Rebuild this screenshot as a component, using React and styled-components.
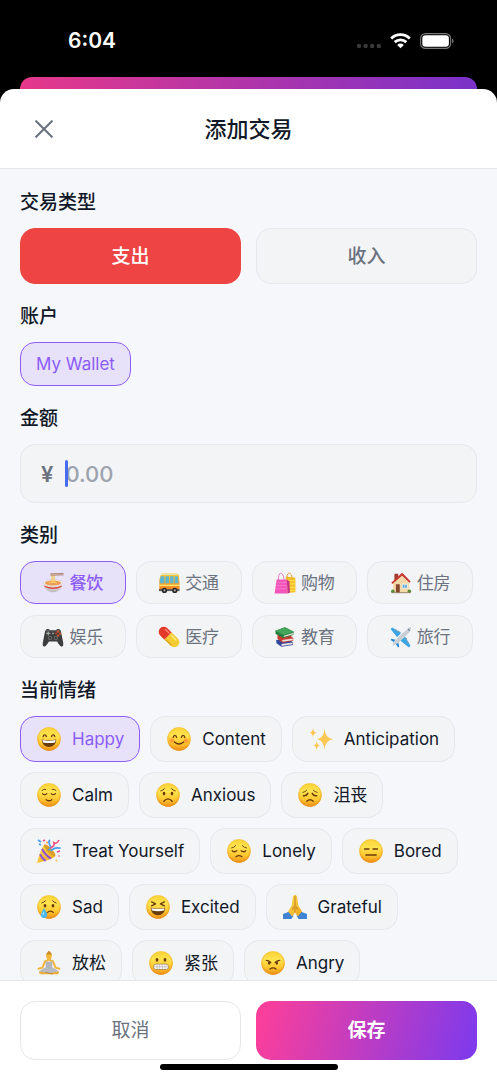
import React, { useState } from 'react';
import styled, { createGlobalStyle, css } from 'styled-components';

const color = {
  ink: '#111827',
  muted: '#6b7280',
  faint: '#9ca3af',
  line: '#e5e7eb',
  field: '#f3f4f6',
  page: '#f5f7fb',
  violet: '#8b5cf6',
  violetSoft: '#e8e1fa',
  red: '#ef4444',
};

const GlobalStyle = createGlobalStyle`
  *, *::before, *::after { box-sizing: border-box; }
  body {
    margin: 0;
    background: #000;
    color: ${color.ink};
    font-family: Inter, "Noto Sans CJK SC", sans-serif;
    font-size: 17px;
    line-height: 24px;
  }
  button, input { font: inherit; color: inherit; }
  button { cursor: pointer; }
`;

const Screen = styled.div`
  display: flex;
  flex-direction: column;
  height: 100vh;
`;

const StatusBar = styled.div`
  display: flex;
  align-items: center;
  justify-content: space-between;
  flex: none;
  height: 77px;
  padding: 4px 43px 0 68px;
  color: #fff;
`;

const Clock = styled.time`
  font-size: 21px;
  font-weight: 600;
`;

const Indicators = styled.div`
  display: flex;
  align-items: center;
  gap: 9px;
  svg { display: block; }
`;

const BackCard = styled.div`
  flex: none;
  height: 12px;
  margin: 0 20px;
  border-radius: 12px 12px 0 0;
  background: linear-gradient(100deg, #e6388a, #7a32c9);
`;

const Sheet = styled.main`
  display: flex;
  flex-direction: column;
  flex: 1;
  min-height: 0;
  overflow: hidden;
  border-radius: 14px 14px 0 0;
  background: #fff;
`;

const Header = styled.header`
  display: grid;
  grid-template-columns: 48px 1fr 48px;
  align-items: center;
  flex: none;
  height: 80px;
  padding: 0 20px;
  border-bottom: 1px solid ${color.line};
`;

const CloseButton = styled.button`
  display: grid;
  place-items: center;
  height: 48px;
  padding: 0;
  border: 0;
  background: none;
  color: ${color.muted};
`;

const Title = styled.h1`
  margin: 0;
  font-size: 22px;
  font-weight: 500;
  line-height: 32px;
  text-align: center;
`;

const Content = styled.div`
  display: flex;
  flex-direction: column;
  flex: 1;
  gap: 20px;
  min-height: 0;
  padding: 21px 20px;
  overflow: hidden;
  background: ${color.page};
`;

const Section = styled.section`
  display: flex;
  flex-direction: column;
  align-items: stretch;
  flex: none;
  gap: 12px;
`;

const SectionTitle = styled.h2`
  margin: 0;
  font-size: 19px;
  font-weight: 500;
  line-height: 26px;
`;

const Pair = styled.div`
  display: grid;
  grid-template-columns: 1fr 1fr;
  gap: 15px;
`;

const option = css`
  display: flex;
  align-items: center;
  justify-content: center;
  border: 1px solid ${(p) => (p.$on ? color.violet : color.line)};
  border-radius: 15px;
  background: ${(p) => (p.$on ? color.violetSoft : color.field)};
  white-space: nowrap;
`;

const TypeButton = styled.button`
  ${option}
  height: 56px;
  padding: 2px 0 0;
  font-size: 19px;
  font-weight: 500;
  color: ${color.muted};
  ${(p) => p.$on && css`
    border-color: ${color.red};
    background: ${color.red};
    color: #fff;
  `}
`;

const AccountButton = styled.button`
  ${option}
  align-self: flex-start;
  height: 44px;
  padding: 0 15px;
  color: ${(p) => (p.$on ? color.violet : color.muted)};
`;

const AmountField = styled.div`
  display: flex;
  align-items: center;
  height: 59px;
  padding: 0 20px;
  border: 1px solid ${color.line};
  border-radius: 15px;
  background: ${color.field};
  color: ${color.muted};
  font-size: 22px;
  font-weight: 600;
`;

const AmountEntry = styled.div`
  position: relative;
  flex: 1;
  margin-left: 12px;
`;

const AmountInput = styled.input`
  display: block;
  width: 100%;
  height: 32px;
  padding: 0;
  border: 0;
  outline: 0;
  background: none;
  font-weight: 500;
  caret-color: transparent;
  &::placeholder { color: ${color.faint}; opacity: 1; }
`;

const Caret = styled.span`
  position: absolute;
  top: 2px;
  left: 0;
  width: 3px;
  height: 27px;
  border-radius: 2px;
  background: #476cf0;
`;

const Categories = styled.div`
  display: grid;
  grid-template-columns: repeat(4, 1fr);
  gap: 11px 10px;
  padding-right: 4px;
`;

const CategoryButton = styled.button`
  ${option}
  gap: 5px;
  height: 43px;
  padding: 1px 0 0;
  color: ${(p) => (p.$on ? color.violet : color.muted)};
  font-weight: ${(p) => (p.$on ? 500 : 400)};
`;

const Moods = styled.div`
  display: flex;
  flex-wrap: wrap;
  gap: 10px;
`;

const MoodButton = styled.button`
  ${option}
  gap: 10px;
  height: 46px;
  padding: 0 15px;
  color: ${(p) => (p.$on ? color.violet : color.ink)};
`;

const Glyph = styled.svg`
  display: block;
  flex: none;
  width: ${(p) => p.$size}px;
  height: ${(p) => p.$size}px;
`;

const Footer = styled.footer`
  flex: none;
  padding: 20px 20px 10px;
  border-top: 1px solid ${color.line};
  background: #fff;
`;

const FooterButton = styled.button`
  height: 59px;
  border: 1px solid ${color.line};
  border-radius: 15px;
  background: #fff;
  color: ${color.muted};
  font-size: 19px;
  ${(p) => p.$primary && css`
    border: 0;
    background: linear-gradient(105deg, #ff3f98, #7c3aed);
    color: #fff;
    font-weight: 700;
  `}
`;

const HomeBar = styled.div`
  width: 178px;
  height: 6px;
  margin: 4px auto 0;
  border-radius: 3px;
  background: #000;
`;

const HiddenDefs = styled.svg`
  position: absolute;
  width: 0;
  height: 0;
`;

const Defs = () => (
  <HiddenDefs aria-hidden="true">
    <defs>
      <linearGradient id="face" x1="0" y1="0" x2="0" y2="1">
        <stop offset="0" stopColor="#f9d336" />
        <stop offset=".35" stopColor="#ffe34f" />
        <stop offset=".7" stopColor="#fdc62f" />
        <stop offset="1" stopColor="#ee8f16" />
      </linearGradient>
      <radialGradient id="rim" cx=".5" cy=".46" r=".54">
        <stop offset=".75" stopColor="#f09a1c" stopOpacity="0" />
        <stop offset="1" stopColor="#e88a14" stopOpacity=".75" />
      </radialGradient>
      <radialGradient id="blush">
        <stop offset="0" stopColor="#ff6b2d" stopOpacity=".75" />
        <stop offset="1" stopColor="#ff7b2d" stopOpacity="0" />
      </radialGradient>
      <linearGradient id="gold" x1="0" y1="0" x2="1" y2="1">
        <stop offset="0" stopColor="#ffdf55" />
        <stop offset="1" stopColor="#eda51b" />
      </linearGradient>
      <linearGradient id="bowl" x1="0" y1="0" x2="0" y2="1">
        <stop offset="0" stopColor="#fbfbfb" />
        <stop offset="1" stopColor="#b8b5ba" />
      </linearGradient>
      <linearGradient id="bus" x1="0" y1="0" x2="0" y2="1">
        <stop offset="0" stopColor="#ffd33b" />
        <stop offset="1" stopColor="#f08020" />
      </linearGradient>
    </defs>
  </HiddenDefs>
);

const ink = { fill: 'none', stroke: '#6b3a0c', strokeWidth: 1.3, strokeLinecap: 'round', strokeLinejoin: 'round' };

const features = {
  happy: (
    <>
      <path {...ink} d="M6.2 9.6C6.5 7.2 9 7.2 9.4 9.6M14.6 9.6C15 7.2 17.5 7.2 17.8 9.6" />
      <path d="M4.8 12.6Q12 14 19.2 12.6C19 17.4 16 20 12 20S5 17.4 4.8 12.6Z" fill="#6b3a0c" />
      <path d="M5.5 13Q12 14.3 18.5 13Q18.5 14.3 18 15.4Q12 16.5 6 15.4Q5.5 14.3 5.5 13Z" fill="#fff" />
    </>
  ),
  content: (
    <>
      <circle cx="5" cy="13.5" r="3.6" fill="url(#blush)" />
      <circle cx="19" cy="13.5" r="3.6" fill="url(#blush)" />
      <path {...ink} d="M6.2 10.4C6.5 7.6 9.2 7.6 9.6 10.4M14.4 10.4C14.8 7.6 17.5 7.6 17.8 10.4M7.4 15Q12 19 16.6 15" />
    </>
  ),
  calm: (
    <>
      <path {...ink} d="M5.6 10.6Q7.6 12.8 9.8 10.6M14.2 10.6Q16.4 12.8 18.4 10.6M9.2 16.7Q12 18.8 14.8 16.7" />
      <path {...ink} strokeWidth=".9" d="M5 7.5Q6.7 5.8 8.8 6.4M19 7.5Q17.3 5.8 15.2 6.4" />
    </>
  ),
  anxious: (
    <>
      <ellipse cx="8" cy="10.6" rx="1.3" ry="1.8" fill="#6b3a0c" />
      <ellipse cx="16" cy="10.6" rx="1.3" ry="1.8" fill="#6b3a0c" />
      <path {...ink} strokeWidth="1" d="M4.8 8Q7 7.4 8.4 5.8M19.2 8Q17 7.4 15.6 5.8" />
      <path {...ink} d="M7.8 18.2Q12 13.6 16.2 18.2" />
    </>
  ),
  upset: (
    <>
      <path {...ink} strokeWidth="1.6" d="M5.4 12.7Q8.6 13 9.8 10.4M18.6 12.7Q15.4 13 14.2 10.4" />
      <path {...ink} strokeWidth=".9" d="M4.8 9.4Q7.4 9 8.7 7.3M19.2 9.4Q16.6 9 15.3 7.3" />
      <path {...ink} d="M8.8 18.3Q12 15.2 15.2 18.3" />
    </>
  ),
  lonely: (
    <>
      <path {...ink} d="M5.2 11.7Q7.5 13.7 9.8 11.8M14.2 11.8Q16.5 13.7 18.8 11.7M9 17.7Q12 15.5 15 17.7" />
      <path {...ink} strokeWidth=".9" d="M4.5 9Q7.2 8.6 8.7 6.7M19.5 9Q16.8 8.6 15.3 6.7" />
    </>
  ),
  bored: <path {...ink} d="M5.5 10H10M14 10H18.5M6.8 16H17.2" />,
  sad: (
    <>
      <ellipse cx="8" cy="10.8" rx="1.4" ry="1.8" fill="#6b3a0c" />
      <ellipse cx="16" cy="10.8" rx="1.4" ry="1.8" fill="#6b3a0c" />
      <path {...ink} strokeWidth="1" d="M4.8 8Q7 7.4 8.4 5.8M19.2 8Q17 7.4 15.6 5.8" />
      <path {...ink} d="M10.3 17.6Q13 14.9 16.3 17.4" />
      <path d="M7 13.3Q10.4 17.8 10 20A3 3 0 0 1 4 20Q4 17.6 7 13.3Z" fill="#48b8f1" />
      <path d="M6.7 16Q5 19 6 20.4Q7.4 19 6.7 16Z" fill="#bfeaff" />
    </>
  ),
  excited: (
    <>
      <path {...ink} d="M5.6 6.9L9.6 8.9L5.6 10.9M18.4 6.9L14.4 8.9L18.4 10.9" />
      <path d="M4.8 12.8Q12 14 19.2 12.8C19 17.6 16 20.2 12 20.2S5 17.6 4.8 12.8Z" fill="#6b3a0c" />
      <path d="M5.5 13.2Q12 14.4 18.5 13.2Q18.5 14.5 18 15.6Q12 16.7 6 15.6Q5.5 14.5 5.5 13.2Z" fill="#fff" />
    </>
  ),
  tense: (
    <>
      <ellipse cx="8" cy="8.8" rx="1.4" ry="1.9" fill="#6b3a0c" />
      <ellipse cx="16" cy="8.8" rx="1.4" ry="1.9" fill="#6b3a0c" />
      <rect x="4.5" y="13.1" width="15" height="5.4" rx="2.6" fill="#fff" stroke="#9b6a2a" strokeWidth=".7" />
      <path d="M5 15.8H19M8 13.4V18.2M10.7 13.4V18.2M13.3 13.4V18.2M16 13.4V18.2" stroke="#a7a3a2" strokeWidth=".6" />
    </>
  ),
  angry: (
    <>
      <ellipse cx="8.2" cy="12" rx="1.3" ry="1.7" fill="#6b3a0c" />
      <ellipse cx="15.8" cy="12" rx="1.3" ry="1.7" fill="#6b3a0c" />
      <path {...ink} d="M5.3 9.4Q7.6 9.4 9.8 11.4M18.7 9.4Q16.4 9.4 14.2 11.4M9 18Q12 15.6 15 18" />
    </>
  ),
};

const drawings = {
  sparkles: (
    <g fill="#fbc953">
      <path d="M15.5 1.5Q16.2 11.4 24 12.2Q16.2 13 15.5 23Q14.8 13 8 12.2Q14.8 11.4 15.5 1.5Z" />
      <path d="M4 1Q4.4 5.2 7.5 5.8Q4.4 6.4 4 10.6Q3.6 6.4.7 5.8Q3.6 5.2 4 1Z" />
      <path d="M7.6 14Q8 18 11 18.6Q8 19.2 7.6 23.6Q7.2 19.2 4.4 18.6Q7.2 18 7.6 14Z" />
    </g>
  ),
  party: (
    <>
      <path d="M7 5.6L18.4 17.2Q13 21.2 0 24Q3 12 7 5.6Z" fill="url(#gold)" />
      <path d="M5 10Q8.4 16.4 14 19.6M3 15.2Q4.8 19.4 8.6 21.8" stroke="#8d50d8" strokeWidth="2" fill="none" />
      <ellipse cx="12.7" cy="11.3" rx="2.4" ry="8" transform="rotate(-44 12.7 11.3)" fill="#d99d2c" />
      <path d="M11 11Q15 10 12.6 5.5Q11 2.5 13 1M14 12Q17 8 23.6 9.2" stroke="#4a9cf2" strokeWidth="1.6" fill="none" />
      <path d="M13.4 9Q18 7 17 3.8Q19.7 5.4 22 1" stroke="#ef4d79" strokeWidth="1.6" fill="none" />
      <path d="M1 1L4 3M2 5L4 6" stroke="#4a9cf2" strokeWidth="1.7" />
      <path d="M6 2L8 1M20 13L23 12" stroke="#ef4d79" strokeWidth="1.6" />
      <circle cx="22" cy="17" r="1.1" fill="#f19bb2" />
      <circle cx="19.5" cy="21.5" r="1" fill="#f6c344" />
      <circle cx="10" cy="3.4" r="1" fill="#f29c38" />
    </>
  ),
  pray: (
    <>
      <path d="M0 19L6.5 16.5L10.5 20.5L8.5 24H0ZM24 19L17.5 16.5L13.5 20.5L15.5 24H24Z" fill="#3f84d2" />
      <path d="M11.9 0Q9.9-.2 9.7 2.5L8.8 10.5L5 16.5L9.2 21.4L12 17.5L14.8 21.4L19 16.5L15.2 10.5L14.3 2.5Q14.1-.2 12.1 0Z" fill="url(#gold)" />
      <path d="M12 .6V17.4M9.3 14.8L10.8 11.4M14.7 14.8L13.2 11.4" stroke="#b87516" strokeWidth=".8" fill="none" />
    </>
  ),
  yoga: (
    <>
      <circle cx="12" cy="4.8" r="2.9" fill="#f6b83a" />
      <path d="M9.2 4Q9.3 1 12 1T14.8 4Q12 2.4 9.2 4Z" fill="#c88a26" />
      <circle cx="12" cy="1.2" r="1.1" fill="#c88a26" />
      <path d="M10.9 7V9.4L8.2 10.2L5.4 16.6L1.6 17.8M13.1 7V9.4L15.8 10.2L18.6 16.6L22.4 17.8" fill="none" stroke="#f3b437" strokeWidth="2" strokeLinecap="round" strokeLinejoin="round" />
      <path d="M8.4 10.2Q12 11.4 15.6 10.2L15 18H9Z" fill="#b3b5bd" />
      <path d="M9 16.3Q3.8 18.4 2.3 20.6Q1.8 22.8 5.2 23L18.8 23Q22.2 22.8 21.7 20.6Q20.2 18.4 15 16.3L12 18.2Z" fill="#b9bbc2" />
      <path d="M2.3 20.4Q1.4 23.4 6 23.3L18 23.3Q22.6 23.4 21.7 20.4L14 22L10 22Z" fill="#efac30" />
      <path d="M8.4 21.2L15.8 23.2" stroke="#b87921" strokeWidth=".7" />
    </>
  ),
  noodles: (
    <>
      <path d="M1.3 11.5C1.3 18.4 5.8 22.6 12 22.6S22.7 18.4 22.7 11.5Z" fill="url(#bowl)" />
      <path d="M1.9 14.8Q12 19.6 22.1 14.8L21.6 16.6Q12 21.2 2.4 16.6Z" fill="#dd4433" />
      <ellipse cx="12" cy="11.8" rx="11" ry="3.8" fill="#f2eeee" stroke="#c5bfc1" strokeWidth=".5" />
      <ellipse cx="12" cy="12" rx="9.2" ry="2.8" fill="#ed9d4f" />
      <path d="M11 12V3M13.2 12V2.8" stroke="#f0cb67" strokeWidth="1.5" />
      <path d="M7 12Q11 9.6 16.5 12" stroke="#f6d17a" fill="none" />
      <path d="M9 1.6L24 1.2M9 3L24 2.8" stroke="#9c6748" strokeWidth=".9" />
    </>
  ),
  bus: (
    <>
      <path d="M3 2Q4 .8 7 .8H20Q22.7.8 23.2 3L24 11V20H1V8Z" fill="url(#bus)" />
      <path d="M3 2Q4 .8 7 .8H20Q22.7.8 23 3H3Z" fill="#e8e2b2" />
      <path d="M2.4 4.2H6.8V12.2H1.2ZM8 4.2H12V12.2H8ZM13.2 4.2H17.2V12.2H13.2ZM18.4 4.2H22L22.8 12.2H18.4Z" fill="#60b7d0" />
      <path d="M1 14.7H24" stroke="#ffe26a" strokeWidth="1.6" />
      <path d="M.6 19H24V21.2H.6Z" fill="#555" />
      <circle cx="6.8" cy="20.4" r="3" fill="#272729" /><circle cx="18.6" cy="20.4" r="3" fill="#272729" />
      <circle cx="6.8" cy="20.4" r="1.2" fill="#aaa" /><circle cx="18.6" cy="20.4" r="1.2" fill="#aaa" />
    </>
  ),
  bags: (
    <>
      <path d="M13 4.5L23.8 6V22.5L12.5 23.5Z" fill="#f5bd29" />
      <path d="M14 9L23.8 9.5M14 13L23.8 13M14 17H23.8M14 21L23.8 20" stroke="#ffdf4b" strokeWidth="1.5" />
      <path d="M14 6Q14.5 0 17.5 1T20 7" fill="none" stroke="#d79b25" />
      <path d="M2.4 8H14L15.2 23.8H.2Z" fill="#f255ba" />
      <path d="M2 11.5H14.2M1.6 15H14.5M1.2 18.5H14.8" stroke="#fb80d1" strokeWidth=".9" />
      <path d="M14 8L17 10L17.6 22.7L15.2 23.8Z" fill="#c22f8d" />
      <path d="M4.6 11V6Q5-.2 8.1 1.2Q10.8 2.2 11 11" fill="none" stroke="#e065bb" />
    </>
  ),
  house: (
    <>
      <path d="M4.5 1.5H8.8V9H4.5Z" fill="#a13a31" />
      <path d="M3 11.5L13 4L21.4 12V23H3Z" fill="#f3d9a8" />
      <path d="M1 11.6L12.5 1Q13.2.4 14 1L23 10.4L21.6 11.7L13.2 3.8L2.2 13Z" fill="#c8392d" />
      <path d="M6.2 13.4H10.6V23H6.2Z" fill="#86472f" />
      <path d="M13.4 13.4H19.2V18H13.4Z" fill="#60a8d5" stroke="#fff" strokeWidth=".8" />
      <path d="M16.3 13.4V18" stroke="#fff" strokeWidth=".6" />
      <circle cx="2.7" cy="21.4" r="2" fill="#558b35" /><circle cx="21.5" cy="21.4" r="2" fill="#558b35" />
      <path d="M1 23H23" stroke="#8e7a5d" />
    </>
  ),
  gamepad: (
    <>
      <path d="M6 3Q3.8 3 3 5.6L.4 18.4Q-.1 22.8 2.3 22.8Q4 22.8 7.4 17H16.6Q20 22.8 21.7 22.8Q24.1 22.8 23.6 18.4L21 5.6Q20.2 3 18 3Q16.2 3 15.4 4.2H8.6Q7.8 3 6 3Z" fill="#3c3d3d" />
      <path d="M3.5 6Q5 3.8 8 5H16Q19 3.8 20.5 6" stroke="#686969" fill="none" />
      <path d="M6.6 5.7V10.3M4.3 8H8.9" stroke="#a6a7a7" strokeWidth="1.4" />
      <circle cx="17.5" cy="5.9" r="1.4" fill="#e0532f" /><circle cx="20" cy="8.2" r="1.3" fill="#e0532f" />
      <circle cx="15.5" cy="8.2" r="1.2" fill="#b93e28" /><circle cx="17.8" cy="10.4" r="1.3" fill="#e0532f" />
      <circle cx="8.7" cy="13.2" r="2.3" fill="#747676" /><circle cx="15.3" cy="13.2" r="2.3" fill="#747676" />
      <circle cx="8.7" cy="13.2" r="1.2" fill="#292929" /><circle cx="15.3" cy="13.2" r="1.2" fill="#292929" />
      <circle cx="12" cy="8" r="1" fill="#a6a7a7" />
    </>
  ),
  pill: (
    <g transform="rotate(45 12 12)">
      <path d="M10.5 6.2H3.6A5.8 5.8 0 0 0 3.6 17.8H10.5Z" fill="#e33b29" />
      <path d="M10.5 6.2H20.4A5.8 5.8 0 0 1 20.4 17.8H10.5Z" fill="#f4cc31" />
      <path d="M3 8.8H9" stroke="#ff9685" strokeWidth="1.4" strokeLinecap="round" />
      <path d="M12.5 8.8H20" stroke="#fff28c" strokeWidth="1.4" strokeLinecap="round" />
      <path d="M12 16.8H20" stroke="#d79a22" strokeWidth="1.2" strokeLinecap="round" />
    </g>
  ),
  books: (
    <>
      <path d="M2 15.5L15 14L21 18V21L8 23.2L2.3 19Z" fill="#33449b" />
      <path d="M8 20L20.6 18.2V20.2L8 22.3Z" fill="#e9e4dc" />
      <path d="M3.4 10L15 8L21.4 13V16.4L9 18.4L3.4 14Z" fill="#c93a31" />
      <path d="M9 15.4L20.9 13.6V15.6L9 17.5Z" fill="#e9e4dc" />
      <path d="M1 5L12 .8L22 6L21.4 9.6L10 13L1.4 8.6Z" fill="#277c40" />
      <path d="M1 5L12 .8L22 6L10.5 9.8Z" fill="#43a65a" />
      <path d="M10.8 10.5L21.4 7.1V8.9L10.6 12.1Z" fill="#e9e4dc" />
    </>
  ),
  plane: (
    <>
      <path d="M13.5 8L2 1.2L.2 3L9 14ZM16 10.5L22.8 22L21 23.8L10 15Z" fill="#38a5e5" />
      <path d="M6 15.2L1.2 14L.2 15.3L5 18.5ZM8.8 18L10 22.8L8.7 23.8L5.6 19Z" fill="#2387d2" />
      <path d="M21.8 1Q24.5.2 23 3.8Q21.4 7.3 15.5 12.8Q8.5 19.4 4 21.5Q1.8 22.2 2.5 20Q4.4 15.5 11.2 8.6Q17.5 2.2 21.8 1Z" fill="#c9ced5" />
      <path d="M21 2Q16 5 9.3 11.7Q5.2 16 3.6 19.3Q6 12.8 12 7.6Q18 2 21 2Z" fill="#fff" />
      <path d="M20 3L22 4.8" stroke="#55789a" strokeWidth="1.2" />
      <path d="M7 3.6L5.8 5M20.2 17L18.8 18.4M10 5.2L8.9 6.4M18.7 13.8L17.4 15" stroke="#8b9ba8" strokeWidth="1.6" />
    </>
  ),
};

function Emoji({ name, size }) {
  const face = features[name];
  return (
    <Glyph $size={size} viewBox={size > 24 ? '-1 -1 26 26' : '-.5 -.5 25 25'} aria-hidden="true">
      {face ? (
        <>
          <circle cx="12" cy="12" r="11.7" fill="url(#face)" />
          <circle cx="12" cy="12" r="11.7" fill="url(#rim)" />
          {face}
        </>
      ) : drawings[name]}
    </Glyph>
  );
}

const categories = [
  ['noodles', '餐饮'], ['bus', '交通'], ['bags', '购物'], ['house', '住房'],
  ['gamepad', '娱乐'], ['pill', '医疗'], ['books', '教育'], ['plane', '旅行'],
];

const moods = [
  ['happy', 'Happy'], ['content', 'Content'], ['sparkles', 'Anticipation'],
  ['calm', 'Calm'], ['anxious', 'Anxious'], ['upset', '沮丧'],
  ['party', 'Treat Yourself'], ['lonely', 'Lonely'], ['bored', 'Bored'],
  ['sad', 'Sad'], ['excited', 'Excited'], ['pray', 'Grateful'],
  ['yoga', '放松'], ['tense', '紧张'], ['angry', 'Angry'],
];

export default function App() {
  const [type, setType] = useState('支出');
  const [category, setCategory] = useState('noodles');
  const [mood, setMood] = useState('happy');
  const [amount, setAmount] = useState('');

  return (
    <Screen>
      <GlobalStyle />
      <Defs />
      <StatusBar>
        <Clock>6:04</Clock>
        <Indicators aria-hidden="true">
          <svg width="25" height="16" viewBox="0 0 25 16" fill="#3a3a3c">
            <circle cx="3" cy="13" r="2.2" /><circle cx="9.6" cy="13" r="2.2" />
            <circle cx="16.2" cy="13" r="2.2" /><circle cx="22.8" cy="13" r="2.2" />
          </svg>
          <svg width="21" height="16" viewBox="0 0 21 16" fill="none" stroke="#fff" strokeWidth="2.8">
            <path d="M1.2 5.5Q5.2 1.7 10.5 1.7T19.8 5.5" />
            <path d="M4.7 9.1Q7.2 6.8 10.5 6.8T16.3 9.1" />
            <path d="M10.5 15.3L7.2 12Q8.6 10.6 10.5 10.6T13.8 12Z" fill="#fff" stroke="none" />
          </svg>
          <svg width="34" height="16" viewBox="0 0 34 16">
            <rect x=".6" y=".6" width="30" height="14.8" rx="4.8" fill="none" stroke="#77777a" strokeWidth="1.1" />
            <rect x="2.3" y="2.3" width="26.6" height="11.4" rx="3.2" fill="#fff" />
            <path d="M32 5.4Q33.6 6.1 33.6 8T32 10.6Z" fill="#77777a" />
          </svg>
        </Indicators>
      </StatusBar>
      <BackCard />
      <Sheet>
        <Header>
          <CloseButton type="button" aria-label="关闭">
            <svg width="18" height="18" viewBox="0 0 18 18" fill="none" stroke="currentColor" strokeWidth="2.1" strokeLinecap="round">
              <path d="M1.2 1.2L16.8 16.8M16.8 1.2L1.2 16.8" />
            </svg>
          </CloseButton>
          <Title>添加交易</Title>
        </Header>

        <Content>
          <Section>
            <SectionTitle>交易类型</SectionTitle>
            <Pair>
              {['支出', '收入'].map((name) => (
                <TypeButton key={name} type="button" $on={type === name} aria-pressed={type === name} onClick={() => setType(name)}>
                  {name}
                </TypeButton>
              ))}
            </Pair>
          </Section>

          <Section>
            <SectionTitle>账户</SectionTitle>
            <AccountButton type="button" $on aria-pressed="true">My Wallet</AccountButton>
          </Section>

          <Section>
            <SectionTitle as="label" htmlFor="amount">金额</SectionTitle>
            <AmountField>
              <span>¥</span>
              <AmountEntry>
                <AmountInput id="amount" inputMode="decimal" placeholder="0.00" value={amount} onChange={(e) => setAmount(e.target.value)} />
                {amount === '' && <Caret />}
              </AmountEntry>
            </AmountField>
          </Section>

          <Section>
            <SectionTitle>类别</SectionTitle>
            <Categories>
              {categories.map(([id, name]) => (
                <CategoryButton key={id} type="button" $on={category === id} aria-pressed={category === id} onClick={() => setCategory(id)}>
                  <Emoji name={id} size={22} />
                  {name}
                </CategoryButton>
              ))}
            </Categories>
          </Section>

          <Section>
            <SectionTitle>当前情绪</SectionTitle>
            <Moods>
              {moods.map(([id, name]) => (
                <MoodButton key={id} type="button" $on={mood === id} aria-pressed={mood === id} onClick={() => setMood(id)}>
                  <Emoji name={id} size={26} />
                  {name}
                </MoodButton>
              ))}
            </Moods>
          </Section>
        </Content>

        <Footer>
          <Pair>
            <FooterButton type="button">取消</FooterButton>
            <FooterButton type="button" $primary>保存</FooterButton>
          </Pair>
          <HomeBar />
        </Footer>
      </Sheet>
    </Screen>
  );
}
